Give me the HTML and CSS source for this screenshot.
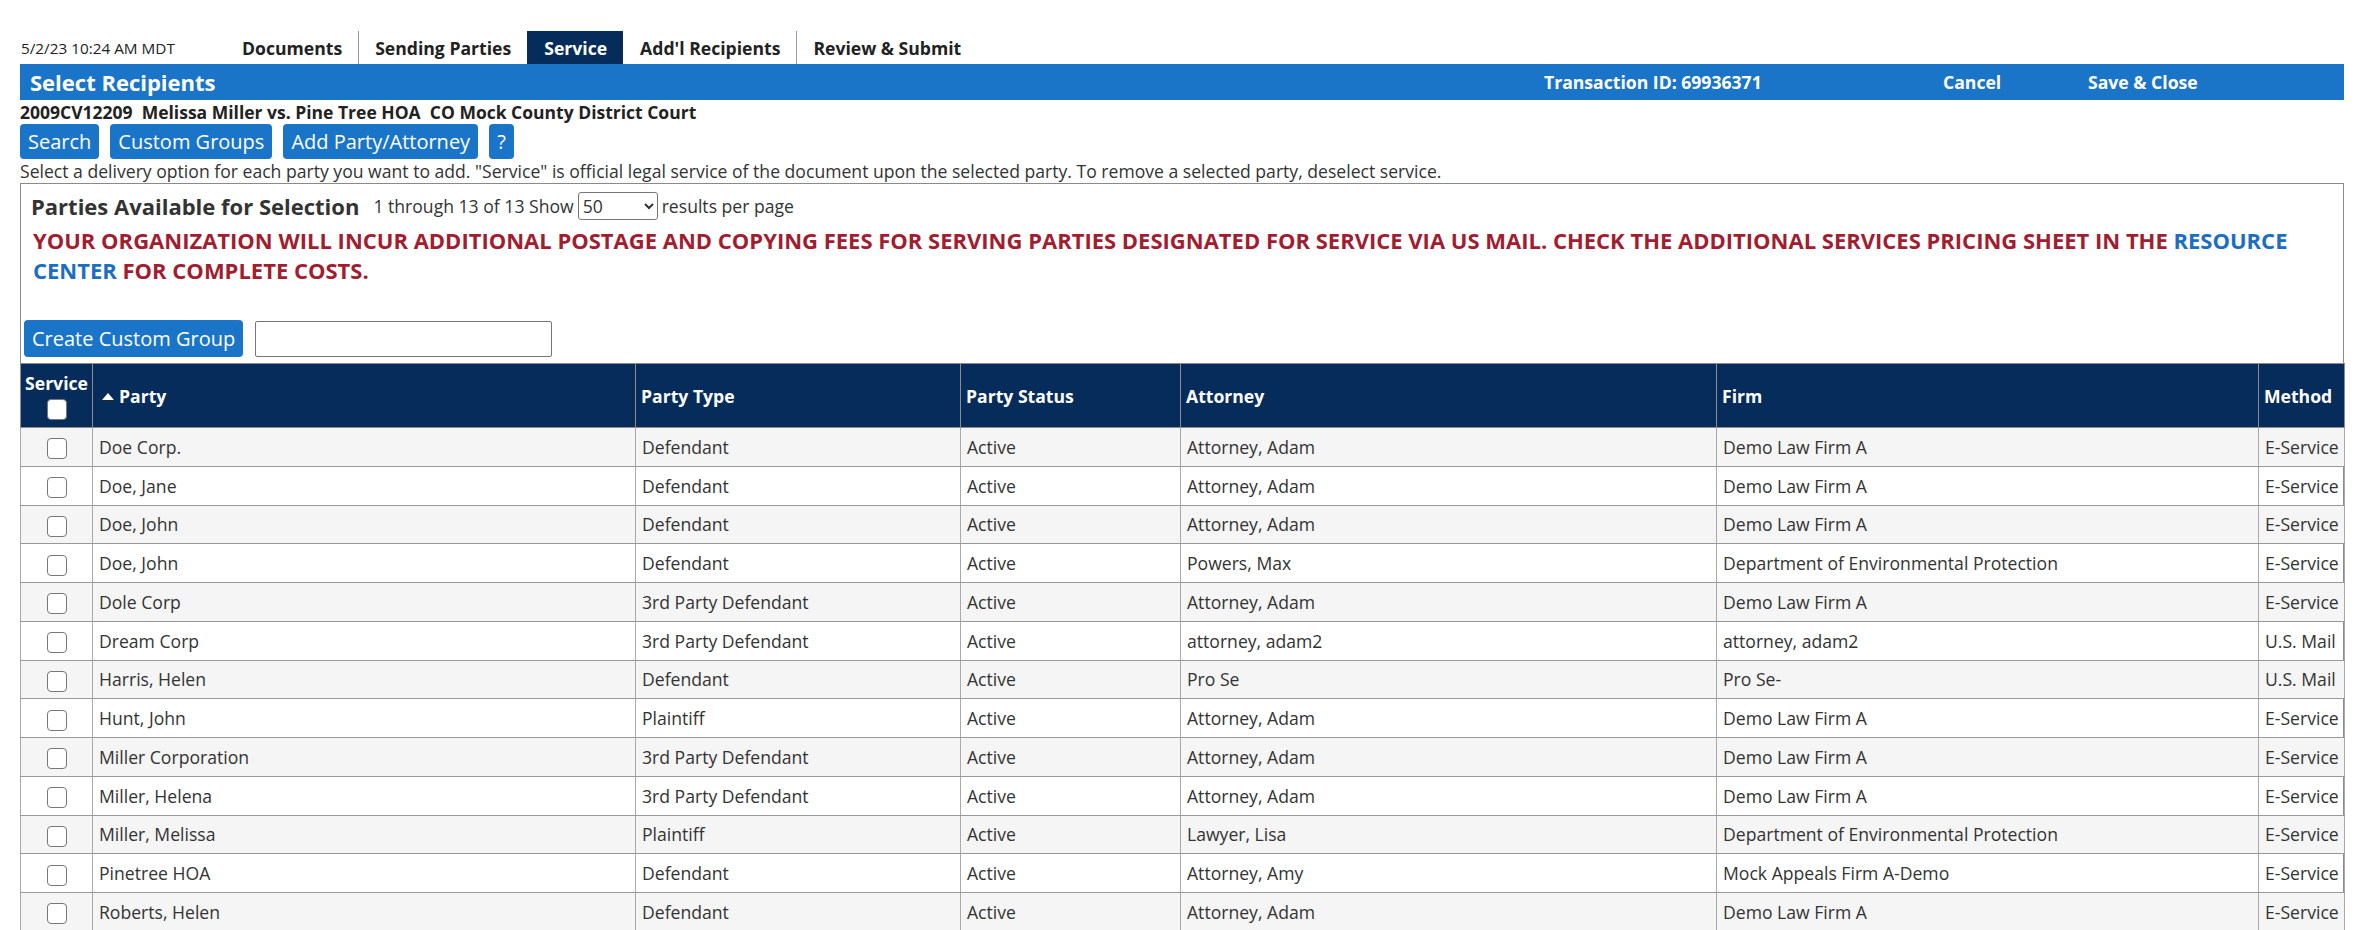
FILE: index.html
```
<!DOCTYPE html>
<html lang="en">
<head>
    <meta charset="UTF-8">
    <meta name="viewport" content="width=device-width, initial-scale=1.0">
    <title>Select Recipients</title>
    <link rel="stylesheet" href="styles.css">
</head>
<body>
    <div class="page">
        <div class="topbar">
            <span class="timestamp">5/2/23 10:24 AM MDT</span>
            <ul class="tabs">
                <li>Documents</li>
                <li>Sending Parties</li>
                <li class="active">Service</li>
                <li>Add'l Recipients</li>
                <li>Review &amp; Submit</li>
            </ul>
        </div>

        <div class="titlebar">
            <h1>Select Recipients</h1>
            <span class="txn">Transaction ID: 69936371</span>
            <a href="#" class="cancel">Cancel</a>
            <a href="#" class="save">Save &amp; Close</a>
        </div>

        <div class="case">2009CV12209&nbsp; Melissa Miller vs. Pine Tree HOA&nbsp; CO Mock County District Court</div>

        <div class="actions">
            <button type="button">Search</button>
            <button type="button">Custom Groups</button>
            <button type="button">Add Party/Attorney</button>
            <button type="button">?</button>
        </div>

        <p class="hint">Select a delivery option for each party you want to add. "Service" is official legal service of the document upon the selected party. To remove a selected party, deselect service.</p>

        <div class="panel">
            <div class="panel-head">
                <h2>Parties Available for Selection</h2>
                <span>1 through 13 of 13 Show</span>
                <select class="per-page">
                    <option>50</option>
                    <option>25</option>
                    <option>100</option>
                </select>
                <span>results per page</span>
            </div>

            <p class="notice">YOUR ORGANIZATION WILL INCUR ADDITIONAL POSTAGE AND COPYING FEES FOR SERVING PARTIES DESIGNATED FOR SERVICE VIA US MAIL. CHECK THE ADDITIONAL SERVICES PRICING SHEET IN THE <a href="#">RESOURCE CENTER</a> FOR COMPLETE COSTS.</p>

            <div class="group-row">
                <button type="button" class="create">Create Custom Group</button>
                <input type="text" class="group-name">
            </div>

            <table class="parties">
                <colgroup>
                    <col class="c-service">
                    <col class="c-party">
                    <col class="c-type">
                    <col class="c-status">
                    <col class="c-attorney">
                    <col class="c-firm">
                    <col class="c-method">
                </colgroup>
                <thead>
                    <tr>
                        <th class="svc">Service<br><input type="checkbox"></th>
                        <th><span class="sort"></span>Party</th>
                        <th>Party Type</th>
                        <th>Party Status</th>
                        <th>Attorney</th>
                        <th>Firm</th>
                        <th>Method</th>
                    </tr>
                </thead>
                <tbody>
                    <tr><td class="svc"><input type="checkbox"></td><td>Doe Corp.</td><td>Defendant</td><td>Active</td><td>Attorney, Adam</td><td>Demo Law Firm A</td><td>E-Service</td></tr>
                    <tr><td class="svc"><input type="checkbox"></td><td>Doe, Jane</td><td>Defendant</td><td>Active</td><td>Attorney, Adam</td><td>Demo Law Firm A</td><td>E-Service</td></tr>
                    <tr><td class="svc"><input type="checkbox"></td><td>Doe, John</td><td>Defendant</td><td>Active</td><td>Attorney, Adam</td><td>Demo Law Firm A</td><td>E-Service</td></tr>
                    <tr><td class="svc"><input type="checkbox"></td><td>Doe, John</td><td>Defendant</td><td>Active</td><td>Powers, Max</td><td>Department of Environmental Protection</td><td>E-Service</td></tr>
                    <tr><td class="svc"><input type="checkbox"></td><td>Dole Corp</td><td>3rd Party Defendant</td><td>Active</td><td>Attorney, Adam</td><td>Demo Law Firm A</td><td>E-Service</td></tr>
                    <tr><td class="svc"><input type="checkbox"></td><td>Dream Corp</td><td>3rd Party Defendant</td><td>Active</td><td>attorney, adam2</td><td>attorney, adam2</td><td>U.S. Mail</td></tr>
                    <tr><td class="svc"><input type="checkbox"></td><td>Harris, Helen</td><td>Defendant</td><td>Active</td><td>Pro Se</td><td>Pro Se-</td><td>U.S. Mail</td></tr>
                    <tr><td class="svc"><input type="checkbox"></td><td>Hunt, John</td><td>Plaintiff</td><td>Active</td><td>Attorney, Adam</td><td>Demo Law Firm A</td><td>E-Service</td></tr>
                    <tr><td class="svc"><input type="checkbox"></td><td>Miller Corporation</td><td>3rd Party Defendant</td><td>Active</td><td>Attorney, Adam</td><td>Demo Law Firm A</td><td>E-Service</td></tr>
                    <tr><td class="svc"><input type="checkbox"></td><td>Miller, Helena</td><td>3rd Party Defendant</td><td>Active</td><td>Attorney, Adam</td><td>Demo Law Firm A</td><td>E-Service</td></tr>
                    <tr><td class="svc"><input type="checkbox"></td><td>Miller, Melissa</td><td>Plaintiff</td><td>Active</td><td>Lawyer, Lisa</td><td>Department of Environmental Protection</td><td>E-Service</td></tr>
                    <tr><td class="svc"><input type="checkbox"></td><td>Pinetree HOA</td><td>Defendant</td><td>Active</td><td>Attorney, Amy</td><td>Mock Appeals Firm A-Demo</td><td>E-Service</td></tr>
                    <tr><td class="svc"><input type="checkbox"></td><td>Roberts, Helen</td><td>Defendant</td><td>Active</td><td>Attorney, Adam</td><td>Demo Law Firm A</td><td>E-Service</td></tr>
                </tbody>
            </table>
        </div>
    </div>
</body>
</html>
```

FILE: styles.css
```
body {
    margin: 0;
    font-family: "Open Sans", "Liberation Sans", Arial, sans-serif;
    font-size: 17.6px;
    color: #333;
    background: #fff;
}

.page {
    width: 2324px;
    padding: 31px 0 0 20px;
}

/* tabs */
.topbar {
    display: flex;
    align-items: center;
    height: 33px;
}

.timestamp {
    width: 205px;
    padding-left: 1px;
    font-size: 15.3px;
    color: #222;
}

.tabs {
    display: flex;
    list-style: none;
    margin: 0;
    padding: 0;
    height: 33px;
}

.tabs li {
    display: flex;
    align-items: center;
    padding: 0 16px;
    border-left: 1px solid #999;
    font-weight: 700;
    color: #222;
}

.tabs li:first-child {
    border-left: none;
}

.tabs li.active {
    background: #052c5a;
    color: #fff;
    border-left-color: #052c5a;
}

.tabs li.active + li {
    border-left-color: #fff;
}

/* blue title bar */
.titlebar {
    display: flex;
    align-items: center;
    height: 36px;
    background: #1a75c9;
    color: #fff;
    font-weight: 700;
}

.titlebar h1 {
    flex: 1;
    margin: 0;
    padding-left: 10px;
    font-size: 22px;
}

.titlebar a {
    color: #fff;
    text-decoration: none;
}

.txn {
    width: 399px;
}

.cancel {
    width: 145px;
}

.save {
    width: 256px;
}

.case {
    height: 24px;
    line-height: 24px;
    font-weight: 700;
    font-size: 17.5px;
    color: #222;
}

.actions {
    display: flex;
    gap: 11px;
}

button {
    height: 35px;
    padding: 0 8px;
    background-color: #1a75c9;
    color: #fff;
    border: none;
    border-radius: 4px;
    font-family: inherit;
    font-size: 20px;
    cursor: pointer;
}

button.create {
    height: 37px;
}

.hint {
    margin: 0;
    height: 24px;
    line-height: 24px;
}

/* parties panel */
.panel {
    border: 1px solid #8a8a8a;
    border-bottom: none;
}

.panel-head {
    display: flex;
    align-items: center;
    gap: 4px;
    padding: 8px 0 0 10px;
    height: 28px;
}

.panel-head h2 {
    margin: 0 10px 0 0;
    font-size: 22px;
    line-height: 28px;
    font-weight: 700;
    color: #333;
}

.per-page {
    width: 80px;
    height: 28px;
    font-family: inherit;
    font-size: 17.6px;
    color: #333;
    border: 1px solid #767676;
    border-radius: 3px;
    background: #fff;
}

.notice {
    margin: 5px 0 0 12px;
    padding-right: 40px;
    line-height: 30px;
    font-size: 22px;
    font-weight: 700;
    color: #a11d2f;
}

.notice a {
    color: #1b6ec2;
    text-decoration: none;
}

.group-row {
    display: flex;
    align-items: center;
    gap: 12px;
    margin-top: 35px;
    padding-left: 3px;
}

.group-name {
    width: 297px;
    height: 36px;
    box-sizing: border-box;
    border: 1px solid #767676;
    border-radius: 2px;
}

/* table */
.parties {
    margin: 6px -1px 0;
    width: calc(100% + 2px);
    border-collapse: collapse;
    table-layout: fixed;
}

.c-service { width: 72px; }
.c-party { width: 543px; }
.c-type { width: 325px; }
.c-status { width: 220px; }
.c-attorney { width: 536px; }
.c-firm { width: 542px; }
.c-method { width: 86px; }

.parties th {
    height: 63px;
    padding: 0 5px;
    background: #052c5a;
    color: #fff;
    text-align: left;
    font-weight: 700;
    border: 1px solid #8c8c8c;
    white-space: nowrap;
}

.parties th.svc {
    padding: 0;
    text-align: center;
    line-height: 24px;
}

.sort {
    display: inline-block;
    width: 0;
    height: 0;
    margin: 0 5px 3px 4px;
    border-left: 6px solid transparent;
    border-right: 6px solid transparent;
    border-bottom: 7px solid #fff;
    filter: drop-shadow(0 1px 0 #222);
}

.parties td {
    height: 37.75px;
    padding: 0 6px;
    border: 1px solid #999;
    border-left-color: #aaa;
    border-right-color: #aaa;
    white-space: nowrap;
    overflow: hidden;
}

.parties tbody tr:nth-child(odd) {
    background: #f5f5f5;
}

.parties td.svc {
    padding: 0;
    text-align: center;
}

.parties input[type="checkbox"] {
    appearance: none;
    width: 20px;
    height: 21px;
    margin: 0;
    vertical-align: middle;
    background: #fff;
    border: 1px solid #777;
    border-radius: 4px;
}
```
